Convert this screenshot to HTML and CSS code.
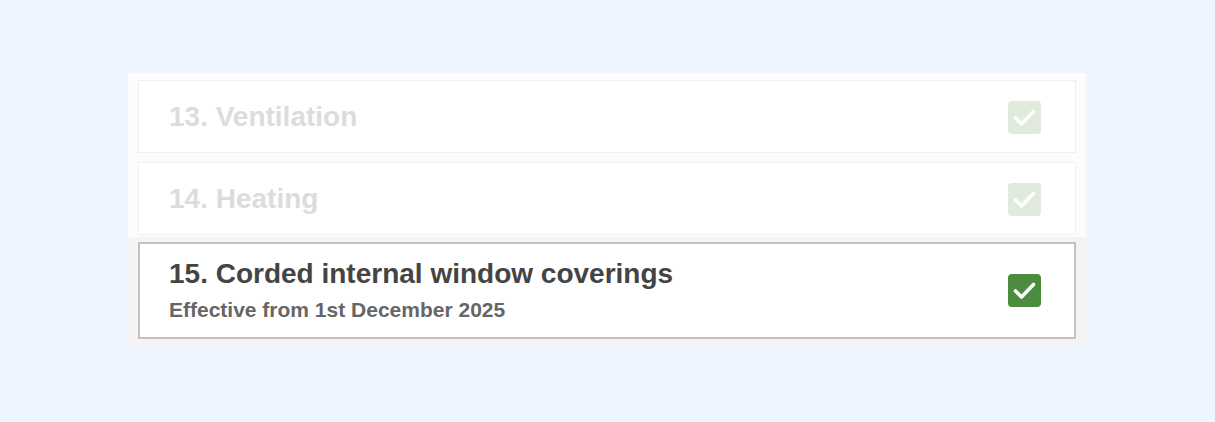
FILE: index.html
```html
<!DOCTYPE html>
<html lang="en">
<head>
<meta charset="utf-8">
<title>Checklist</title>
<link rel="stylesheet" href="styles.css">
</head>
<body>
<main class="stage">
  <section class="panel">
    <div class="done-group">
      <div class="card card-done">
        <h2 class="card-title">13. Ventilation</h2>
        <span class="check check-faded"><svg viewBox="0 0 33 33" width="33" height="33"><path d="M7.5 17 L13.5 23 L25.5 10.5" fill="none" stroke="#fff" stroke-width="3.6" stroke-linecap="round" stroke-linejoin="round"/></svg></span>
      </div>
      <div class="card card-done">
        <h2 class="card-title">14. Heating</h2>
        <span class="check check-faded"><svg viewBox="0 0 33 33" width="33" height="33"><path d="M7.5 17 L13.5 23 L25.5 10.5" fill="none" stroke="#fff" stroke-width="3.6" stroke-linecap="round" stroke-linejoin="round"/></svg></span>
      </div>
    </div>
    <div class="current-group">
      <div class="card card-current">
        <div class="card-text">
          <h2 class="card-title">15. Corded internal window coverings</h2>
          <p class="card-sub">Effective from 1st December 2025</p>
        </div>
        <span class="check"><svg viewBox="0 0 33 33" width="33" height="33"><path d="M7.5 17 L13.5 23 L25.5 10.5" fill="none" stroke="#fff" stroke-width="3.6" stroke-linecap="round" stroke-linejoin="round"/></svg></span>
      </div>
    </div>
  </section>
</main>
</body>
</html>
```
FILE: styles.css
```css
* { box-sizing: border-box; }
html, body {
  margin: 0;
  padding: 0;
  background: #eef5fe;
  font-family: "Liberation Sans", Arial, sans-serif;
}
.stage {
  display: flex;
  padding: 73px 0 0 128px;
}
.panel {
  width: 958px;
  background: #f4f4f4;
}
.done-group {
  background: #fcfcfc;
  padding: 7px 10px 2px;
  display: flex;
  flex-direction: column;
  gap: 9px;
}
.current-group {
  padding: 5px 10px 9px;
}
.card {
  background: #fff;
  display: flex;
  align-items: center;
  justify-content: space-between;
  padding: 0 34px 0 30px;
}
.card-done {
  border: 1px solid #f0f0f0;
  height: 73px;
}
.card-done .card-title {
  color: #dcdcdc;
}
.card-done .check { margin-top: 2px; }
.card-current {
  border: 2px solid #c2c2c2;
  height: 97px;
  padding-left: 29px;
  padding-right: 33px;
}
.card-title {
  margin: 0;
  font-size: 28px;
  font-weight: 700;
  line-height: 32px;
  color: #444;
}
.card-text { margin-bottom: 2px; }
.card-sub {
  margin: 8px 0 0;
  font-size: 21px;
  font-weight: 700;
  line-height: 24px;
  color: #666;
}
.check {
  width: 33px;
  height: 33px;
  border-radius: 4px;
  background: #4b8c3f;
  display: flex;
  flex: none;
}
.check-faded {
  background: #e0ebdc;
}
.check svg { display: block; }
```
